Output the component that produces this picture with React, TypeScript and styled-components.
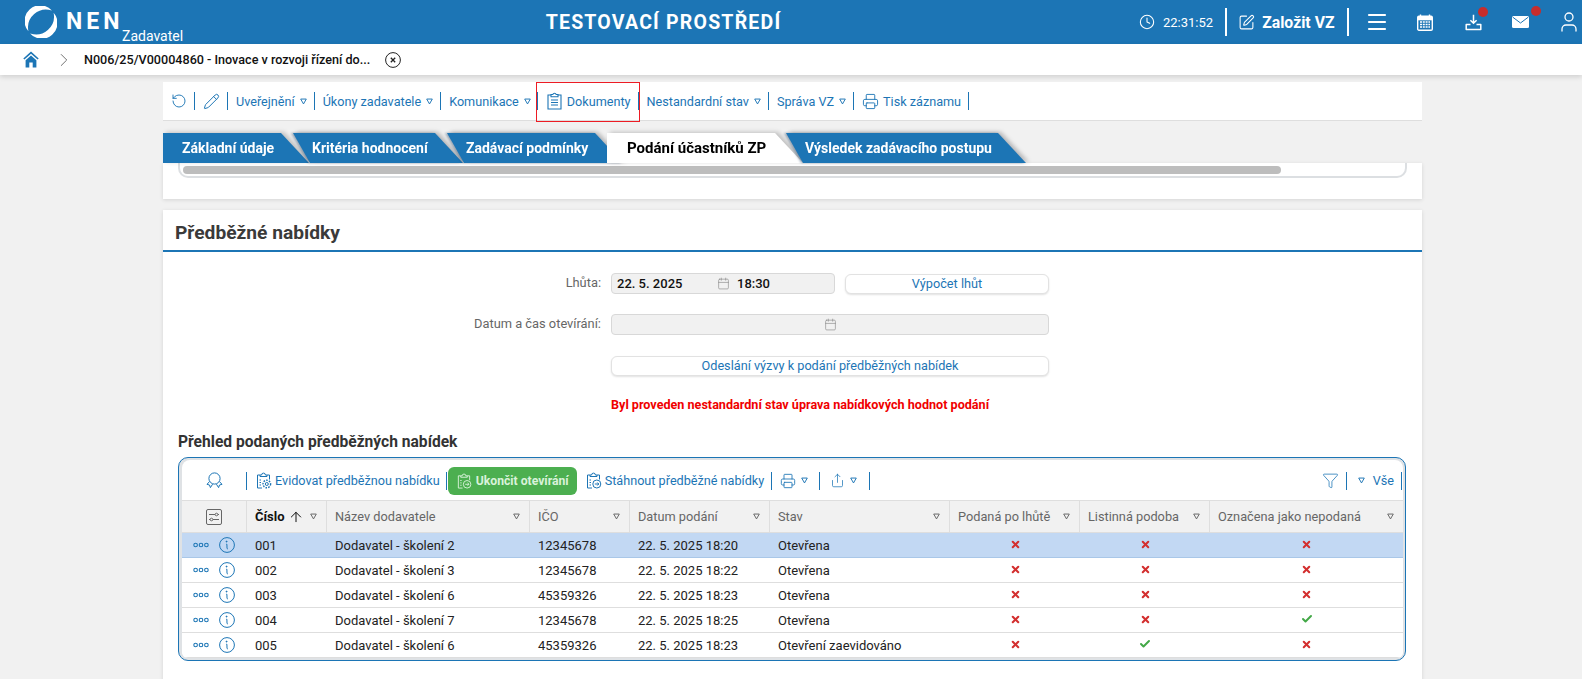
import styled, { createGlobalStyle } from "styled-components";
import {
  ArrowUp,
  Check,
  ChevronRight,
  Clock,
  Menu,
  Pencil,
  Printer,
  RotateCcw,
  Share,
  SquarePen,
  User,
  X,
  Calendar,
  Funnel,
} from "lucide-react";

const BLUE = "#1c75b5";

const GlobalStyle = createGlobalStyle`
  html, body {
    margin: 0;
    height: 679px;
    overflow: hidden;
    background: #f1f1f1;
    font-family: Roboto, "Liberation Sans", sans-serif;
    font-size: 13px;
  }
  * { box-sizing: border-box; }
`;

const TopBar = styled.header`
  display: flex;
  align-items: center;
  height: 44px;
  background: ${BLUE};
  color: #fff;
`;

const Brand = styled.div`
  position: relative;
  display: flex;
  align-items: center;
  width: 199px;
  height: 44px;
  padding-left: 25px;
`;

const BrandName = styled.span`
  margin-left: 9px;
  margin-top: -2px;
  font-size: 23px;
  font-weight: 700;
  letter-spacing: 4px;
`;

const BrandRole = styled.span`
  position: absolute;
  left: 122px;
  top: 28px;
  font-size: 14px;
  line-height: 16px;
`;

const EnvTitle = styled.div`
  flex: 1;
  text-align: center;
  font-size: 19.5px;
  font-weight: 700;
  letter-spacing: 1.2px;
`;

const TopActions = styled.div`
  display: flex;
  flex: none;
  align-items: center;
  width: 454px;
  height: 44px;
  padding-left: 11px;
  white-space: nowrap;
  & > * { flex: none; }
`;

const ClockText = styled.span`
  margin-left: 8px;
  font-size: 13px;
`;

const TopSep = styled.span`
  width: 2px;
  height: 28px;
  margin: 0 11px 0 12px;
  background: #fff;
`;

const NewLabel = styled.span`
  margin-left: 7px;
  font-size: 15.8px;
  font-weight: 700;
`;

const TopIcon = styled.span<{ $left: number; $dotX?: number; $dotY?: number }>`
  position: relative;
  display: flex;
  margin-left: ${(p) => p.$left}px;
  ${(p) =>
    p.$dotX !== undefined &&
    `&::after {
      content: "";
      position: absolute;
      left: ${p.$dotX}px;
      top: ${p.$dotY}px;
      width: 10px;
      height: 10px;
      border-radius: 50%;
      background: #c62d2d;
    }`}
`;

const Crumbs = styled.nav`
  position: relative;
  display: flex;
  align-items: center;
  height: 31px;
  padding-left: 23px;
  background: #fff;
  box-shadow: 0 2px 5px rgba(0, 0, 0, 0.14);
`;

const CrumbArrow = styled.span`
  display: flex;
  margin-left: 14px;
  color: #666;
`;

const CrumbText = styled.span`
  margin: 0 15px 0 9px;
  font-size: 12.6px;
  font-weight: 500;
  color: #111;
`;

const Page = styled.main`
  width: 1259px;
  margin-left: 163px;
`;

const ActionBar = styled.div`
  display: flex;
  align-items: center;
  height: 39px;
  margin-top: 7px;
  padding-left: 8px;
  background: #fff;
  border-bottom: 1px solid #dedede;
  color: ${BLUE};
`;

const Sep = styled.span<{ $h?: number; $l?: number; $r?: number; $hidden?: boolean }>`
  flex: none;
  width: 1px;
  height: ${(p) => p.$h ?? 18}px;
  margin: 0 ${(p) => p.$r ?? 8}px 0 ${(p) => p.$l ?? 7}px;
  background: ${(p) => (p.$hidden ? "transparent" : BLUE)};
`;

const ActionItem = styled.span<{ $gap?: number }>`
  display: inline-flex;
  align-items: center;
  gap: ${(p) => p.$gap ?? 5}px;
  font-size: 12.65px;
  white-space: nowrap;
  color: ${BLUE};
`;

const Highlight = styled.span`
  position: relative;
  display: inline-flex;
  align-items: center;
  &::after {
    content: "";
    position: absolute;
    left: -11px;
    right: -9px;
    top: -10px;
    bottom: -12px;
    border: 1px solid #ed1c24;
  }
`;

const TabStrip = styled.div`
  position: relative;
  display: flex;
  height: 30px;
  margin-top: 12px;
`;

const TabSlot = styled.div<{ $width: number; $active?: boolean; $first?: boolean; $z: number }>`
  position: relative;
  flex: none;
  width: ${(p) => p.$width}px;
  z-index: ${(p) => p.$z};
  filter: drop-shadow(3px -1px 2px rgba(0, 0, 0, 0.2))
    ${(p) => (p.$first || p.$active ? "" : "drop-shadow(-2px 0 1px rgba(0, 40, 80, 0.35))")};
`;

const TabFace = styled.div<{ $active?: boolean; $first?: boolean; $pad: number; $width: number }>`
  width: ${(p) => p.$width}px;
  height: 30px;
  padding-left: ${(p) => p.$pad}px;
  font-size: ${(p) => (p.$active ? 15 : 14)}px;
  line-height: 31px;
  font-weight: 700;
  white-space: nowrap;
  color: ${(p) => (p.$active ? "#000" : "#fff")};
  background: ${(p) => (p.$active ? "#fff" : BLUE)};
  clip-path: ${(p) =>
    p.$first || p.$active
      ? "polygon(0 0, calc(100% - 28px) 0, 100% 100%, 0 100%)"
      : "polygon(0 0, calc(100% - 28px) 0, 100% 100%, 17px 100%)"};
`;

const ScrollCard = styled.section`
  height: 36px;
  padding: 0 15px;
  background: #fff;
  box-shadow: 0 1px 4px rgba(0, 0, 0, 0.12);
`;

const ScrollTrack = styled.div`
  height: 15px;
  padding: 3px 3px 0 3px;
  border: 2px solid #dcdfe2;
  border-top: 0;
  border-radius: 0 0 10px 10px;
`;

const ScrollThumb = styled.div`
  width: 1098px;
  height: 8px;
  border-radius: 4px;
  background: #bdbdbd;
`;

const Card = styled.section`
  margin-top: 11px;
  height: 480px;
  background: #fff;
  box-shadow: 0 1px 4px rgba(0, 0, 0, 0.12);
`;

const CardTitle = styled.h2`
  margin: 0;
  height: 42px;
  padding: 12px 0 0 12px;
  border-bottom: 2px solid ${BLUE};
  font-size: 19.2px;
  line-height: 22px;
  font-weight: 700;
  color: #3a3a3a;
`;

const Form = styled.div`
  display: flex;
  flex-direction: column;
  gap: 20px;
  padding-top: 21px;
`;

const FormRow = styled.div`
  display: flex;
  align-items: center;
  height: 21px;
`;

const Label = styled.label`
  width: 438px;
  margin-right: 10px;
  margin-top: -3px;
  text-align: right;
  font-size: 12.85px;
  color: #666;
`;

const Field = styled.div<{ $width: number; $center?: boolean }>`
  display: flex;
  align-items: center;
  justify-content: ${(p) => (p.$center ? "center" : "flex-start")};
  width: ${(p) => p.$width}px;
  height: 21px;
  padding-left: ${(p) => (p.$center ? 0 : 5)}px;
  border: 1px solid #d8d8d8;
  border-radius: 4px;
  background: #f1f1f1;
  font-size: 13px;
  font-weight: 500;
  color: #111;
  svg { color: #8a8a8a; }
`;

const FieldDate = styled.span`
  width: 100px;
`;

const FieldTime = styled.span`
  margin-left: 7px;
`;

const FormButton = styled.button<{ $width: number; $left?: number }>`
  width: ${(p) => p.$width}px;
  height: 20px;
  margin-left: ${(p) => p.$left ?? 0}px;
  padding: 0;
  border: 1px solid #e2e2e2;
  border-radius: 6px;
  background: #fff;
  box-shadow: 0 1px 2px rgba(0, 0, 0, 0.12);
  font-family: inherit;
  font-size: 12.7px;
  color: ${BLUE};
`;

const Warning = styled.p`
  margin: 21px 0 0 448px;
  font-size: 12.6px;
  line-height: 15px;
  font-weight: 700;
  color: #f00000;
`;

const SectionTitle = styled.h3`
  margin: 21px 0 0 15px;
  font-size: 15.6px;
  line-height: 18px;
  font-weight: 700;
  color: #333;
`;

const Panel = styled.div`
  width: 1228px;
  height: 204px;
  margin: 6px 0 0 15px;
  padding: 2px 2px 2px 3px;
  border: 1px solid ${BLUE};
  border-radius: 10px;
  background: #dfe2e5;
`;

const PanelInner = styled.div`
  height: 198px;
  border-radius: 8px 8px 6px 6px;
  background: #fff;
  overflow: hidden;
`;

const PanelBar = styled.div`
  display: flex;
  align-items: center;
  height: 40px;
  padding-left: 24px;
  padding-top: 1px;
`;

const GreenButton = styled.span`
  display: inline-flex;
  align-items: center;
  gap: 4px;
  width: 129px;
  height: 28px;
  padding-left: 8px;
  border-radius: 6px;
  background: #4caf50;
  color: #d9f2da;
  font-size: 12.2px;
  font-weight: 700;
  white-space: nowrap;
`;

const Spacer = styled.span`
  flex: 1;
`;

const Grid = styled.div<{ $h: number; $selected?: boolean; $head?: boolean }>`
  display: grid;
  grid-template-columns: 65px 80px 203px 100px 140px 180px 130px 130px 193px;
  height: ${(p) => p.$h}px;
  border-top: ${(p) => (p.$head ? "1px solid #dedede" : "0")};
  border-bottom: 1px solid ${(p) => (p.$selected ? "#a9c7e8" : "#dedede")};
  background: ${(p) => (p.$head ? "#f1f1f1" : p.$selected ? "#c2d8f3" : "#fff")};
`;

const HeadCell = styled.div<{ $strong?: boolean }>`
  display: flex;
  align-items: center;
  justify-content: space-between;
  padding: 0 9px 0 8px;
  border-right: 1px solid #dedede;
  font-size: ${(p) => (p.$strong ? 13 : 12.75)}px;
  font-weight: ${(p) => (p.$strong ? 700 : 400)};
  color: ${(p) => (p.$strong ? "#111" : "#666")};
  white-space: nowrap;
  &:last-child { border-right: 0; }
`;

const SortMark = styled.span`
  display: inline-flex;
  align-items: center;
  gap: 6px;
  color: #111;
`;

const CornerCell = styled.div`
  display: flex;
  align-items: center;
  justify-content: center;
  border-right: 1px solid #dedede;
`;

const Cell = styled.div`
  display: flex;
  align-items: center;
  padding-left: 8px;
  font-size: 13px;
  color: #222;
  white-space: nowrap;
`;

const ActionCell = styled.div`
  display: flex;
  align-items: center;
  gap: 10px;
  padding-left: 11px;
  color: ${BLUE};
`;

const FlagCell = styled.div<{ $yes?: boolean }>`
  display: flex;
  align-items: center;
  justify-content: center;
  padding-bottom: 2px;
  color: ${(p) => (p.$yes ? "#43a847" : "#d32f2f")};
`;

const Logo = () => (
  <svg width="32" height="32" viewBox="0 0 32 32" fill="#fff">
    <path d="M3.4 25.2A15.6 15.6 0 0 1 26.9 4.6 A18 18 0 0 0 3.4 25.2Z" />
    <path d="M3.4 25.2A15.6 15.6 0 0 1 26.9 4.6 A18 18 0 0 0 3.4 25.2Z" transform="rotate(180 16 16)" />
  </svg>
);

const HomeIcon = () => (
  <svg width="16" height="17" viewBox="0 0 16 17" fill={BLUE}>
    <path d="M8 0.5 0.3 7.4 1.4 8.6 8 2.8 14.6 8.6 15.7 7.4Z" />
    <path d="M2.6 9.2 8 4.5 13.4 9.2V16.5H9.7V11.5H6.3V16.5H2.6Z" />
  </svg>
);

const CloseCircle = () => (
  <svg width="16" height="16" viewBox="0 0 16 16" fill="none" stroke="#222" strokeWidth="1">
    <circle cx="8" cy="8" r="7.4" />
    <path d="M5.8 5.8 10.2 10.2M10.2 5.8 5.8 10.2" strokeWidth="1.3" />
  </svg>
);

const CalendarIcon = () => (
  <svg width="16" height="17" viewBox="0 0 16 17" fill="none" stroke="#fff">
    <path d="M3.5 0.5V4M12.5 0.5V4" strokeWidth="1.4" />
    <rect x="0.7" y="2.2" width="14.6" height="14" rx="1.2" strokeWidth="1.4" />
    <path d="M1 3H15V6H1Z" fill="#fff" strokeWidth="0.6" />
    <path d="M3 8H13M3 10.5H13M3 13H13" strokeWidth="1.5" strokeDasharray="2 0.8" />
  </svg>
);

const Caret = ({ size = 7 }: { size?: number }) => (
  <svg width={size} height={size} viewBox="0 0 8 8" fill="none" stroke="currentColor" strokeWidth="1.1">
    <path d="M0.8 1.2H7.2L4 6.8Z" />
  </svg>
);

const GreyCaret = () => (
  <svg width="7" height="7" viewBox="0 0 8 8" fill="none" stroke="#666" strokeWidth="1.1">
    <path d="M0.8 1.2H7.2L4 6.8Z" />
  </svg>
);

const ClipIcon = ({ badge, size = 17 }: { badge?: "gear" | "arrow"; size?: number }) => (
  <svg width={size} height={size} viewBox="0 0 17 17" fill="none" stroke="currentColor" strokeWidth="1">
    <path d="M5 3H2.5V16H7M12 3H14.5V7.5" />
    <path d="M5 4.5V3H6.6A1.9 1.9 0 0 1 10.4 3H12V4.5Z" />
    <path d="M4.5 8H6M4.5 10.5H6M4.5 13H6" />
    {badge === "gear" ? (
      <>
        <circle cx="11.8" cy="12" r="1.5" />
        <circle cx="11.8" cy="12" r="3.8" strokeDasharray="1.6 1.2" strokeWidth="1.4" />
      </>
    ) : (
      <>
        <circle cx="11.8" cy="12" r="4" />
        <path d="M9.8 12H13.8M12.3 10.5 13.8 12 12.3 13.5" />
      </>
    )}
  </svg>
);

const DocIcon = () => (
  <svg width="15" height="18" viewBox="0 0 15 18" fill="none" stroke="currentColor" strokeWidth="1.1">
    <path d="M4 3H1V17H14V3H11" />
    <path d="M4 4.8V2.5H5.8A1.8 1.8 0 0 1 9.2 2.5H11V4.8Z" />
    <path d="M4 8H11M4 10.5H11M4 13H11" />
  </svg>
);

const RibbonIcon = () => (
  <svg width="17" height="17" viewBox="0 0 17 17" fill="none" stroke="currentColor" strokeWidth="1">
    <circle cx="8.5" cy="6.5" r="5.6" />
    <path d="M3.6 9.5 1 12.3 3.5 13 4.4 15.6 6.6 12.2" />
    <path d="M13.4 9.5 16 12.3 13.5 13 12.6 15.6 10.4 12.2" />
  </svg>
);

const PrinterIcon = ({ size = 17 }: { size?: number }) => <Printer size={size} strokeWidth={1.3} />;

const DownloadIcon = () => (
  <svg width="17" height="17" viewBox="0 0 17 17" fill="none" stroke="#fff" strokeWidth="1.5">
    <path d="M8.5 0.8V9M5.4 6.2 8.5 9.3 11.6 6.2" />
    <path d="M5.5 10.6H1.2V15.6H15.8V10.6H11.5" strokeLinejoin="round" />
  </svg>
);

const MailIcon = () => (
  <svg width="17" height="12" viewBox="0 0 17 12">
    <rect width="17" height="12" rx="1.5" fill="#fff" />
    <path d="M0.8 1.2 8.5 7 16.2 1.2" fill="none" stroke={BLUE} strokeWidth="1" />
  </svg>
);

const DotsIcon = () => (
  <svg width="16" height="6" viewBox="0 0 16 6" fill="none" stroke="currentColor" strokeWidth="1.1">
    <circle cx="2.6" cy="3" r="1.8" />
    <circle cx="8" cy="3" r="1.8" />
    <circle cx="13.4" cy="3" r="1.8" />
  </svg>
);

const InfoIcon = () => (
  <svg width="16" height="16" viewBox="0 0 16 16" fill="none" stroke="currentColor" strokeWidth="1">
    <circle cx="8" cy="8" r="7.4" />
    <circle cx="7.6" cy="4.6" r="0.5" fill="currentColor" />
    <path d="M7.2 7.2 7.9 7.2 8 11.2C8 11.8 8.4 11.9 9 11.5" />
  </svg>
);

const ColumnsIcon = () => (
  <svg width="16" height="16" viewBox="0 0 16 16" fill="none" stroke="#666" strokeWidth="1">
    <rect x="0.5" y="0.5" width="15" height="15" rx="1.5" />
    <path d="M3 5.5H9M12 5.5H13M3 10.5H4M7 10.5H13" />
    <circle cx="10.5" cy="5.5" r="1.3" />
    <circle cx="5.5" cy="10.5" r="1.3" />
  </svg>
);

const tabs = [
  { label: "Základní údaje", slot: 130, width: 146, pad: 19, z: 1 },
  { label: "Kritéria hodnocení", slot: 154, width: 170, pad: 19, z: 2 },
  { label: "Zadávací podmínky", slot: 160, width: 176, pad: 19, z: 3 },
  { label: "Podání účastníků ZP", slot: 179, width: 196, pad: 20, z: 4, active: true },
  { label: "Výsledek zadávacího postupu", slot: 240, width: 240, pad: 19, z: 5 },
];

const columns = [
  "Název dodavatele",
  "IČO",
  "Datum podání",
  "Stav",
  "Podaná po lhůtě",
  "Listinná podoba",
  "Označena jako nepodaná",
];

const rows = [
  { no: "001", name: "Dodavatel - školení 2", ico: "12345678", date: "22. 5. 2025 18:20", state: "Otevřena", flags: [false, false, false], selected: true },
  { no: "002", name: "Dodavatel - školení 3", ico: "12345678", date: "22. 5. 2025 18:22", state: "Otevřena", flags: [false, false, false] },
  { no: "003", name: "Dodavatel - školení 6", ico: "45359326", date: "22. 5. 2025 18:23", state: "Otevřena", flags: [false, false, false] },
  { no: "004", name: "Dodavatel - školení 7", ico: "12345678", date: "22. 5. 2025 18:25", state: "Otevřena", flags: [false, false, true] },
  { no: "005", name: "Dodavatel - školení 6", ico: "45359326", date: "22. 5. 2025 18:23", state: "Otevření zaevidováno", flags: [false, true, false] },
];

export default function App() {
  return (
    <>
      <GlobalStyle />
      <TopBar>
        <Brand>
          <Logo />
          <BrandName>NEN</BrandName>
          <BrandRole>Zadavatel</BrandRole>
        </Brand>
        <EnvTitle>TESTOVACÍ PROSTŘEDÍ</EnvTitle>
        <TopActions>
          <Clock size={16} strokeWidth={1.6} />
          <ClockText>22:31:52</ClockText>
          <TopSep />
          <SquarePen size={17} strokeWidth={1.5} />
          <NewLabel>Založit VZ</NewLabel>
          <TopSep />
          <TopIcon $left={5}>
            <Menu size={24} strokeWidth={2.2} />
          </TopIcon>
          <TopIcon $left={28}>
            <CalendarIcon />
          </TopIcon>
          <TopIcon $left={32} $dotX={13} $dotY={-7}>
            <DownloadIcon />
          </TopIcon>
          <TopIcon $left={30} $dotX={19} $dotY={-10}>
            <MailIcon />
          </TopIcon>
          <TopIcon $left={28}>
            <User size={24} strokeWidth={1.3} />
          </TopIcon>
        </TopActions>
      </TopBar>

      <Crumbs>
        <HomeIcon />
        <CrumbArrow>
          <ChevronRight size={22} strokeWidth={1} />
        </CrumbArrow>
        <CrumbText>N006/25/V00004860 - Inovace v rozvoji řízení do...</CrumbText>
        <CloseCircle />
      </Crumbs>

      <Page>
        <ActionBar>
          <RotateCcw size={16} strokeWidth={1.4} />
          <Sep />
          <Pencil size={17} strokeWidth={1.4} />
          <Sep />
          <ActionItem>Uveřejnění <Caret /></ActionItem>
          <Sep />
          <ActionItem>Úkony zadavatele <Caret /></ActionItem>
          <Sep />
          <ActionItem>Komunikace <Caret /></ActionItem>
          <Sep $l={6} $r={9} />
          <Highlight>
            <ActionItem><DocIcon /> Dokumenty</ActionItem>
          </Highlight>
          <Sep $l={7} $r={8} />
          <ActionItem>Nestandardní stav <Caret /></ActionItem>
          <Sep />
          <ActionItem>Správa VZ <Caret /></ActionItem>
          <Sep />
          <ActionItem $gap={4}><PrinterIcon /> Tisk záznamu</ActionItem>
          <Sep />
        </ActionBar>

        <TabStrip>
          {tabs.map((tab, i) => (
            <TabSlot key={tab.label} $width={tab.slot} $z={tab.z} $first={i === 0} $active={tab.active}>
              <TabFace $first={i === 0} $active={tab.active} $pad={tab.pad} $width={tab.width}>
                {tab.label}
              </TabFace>
            </TabSlot>
          ))}
        </TabStrip>

        <ScrollCard>
          <ScrollTrack>
            <ScrollThumb />
          </ScrollTrack>
        </ScrollCard>

        <Card>
          <CardTitle>Předběžné nabídky</CardTitle>
          <Form>
            <FormRow>
              <Label>Lhůta:</Label>
              <Field $width={224}>
                <FieldDate>22. 5. 2025</FieldDate>
                <Calendar size={13} strokeWidth={1.2} />
                <FieldTime>18:30</FieldTime>
              </Field>
              <FormButton $width={204} $left={10}>Výpočet lhůt</FormButton>
            </FormRow>
            <FormRow>
              <Label>Datum a čas otevírání:</Label>
              <Field $width={438} $center>
                <Calendar size={13} strokeWidth={1.2} />
              </Field>
            </FormRow>
            <FormRow>
              <Label />
              <FormButton $width={438}>Odeslání výzvy k podání předběžných nabídek</FormButton>
            </FormRow>
          </Form>
          <Warning>Byl proveden nestandardní stav úprava nabídkových hodnot podání</Warning>
          <SectionTitle>Přehled podaných předběžných nabídek</SectionTitle>
          <Panel>
            <PanelInner>
              <PanelBar>
                <ActionItem><RibbonIcon /></ActionItem>
                <Sep $l={23} $r={8} />
                <ActionItem $gap={3}><ClipIcon badge="gear" /> Evidovat předběžnou nabídku</ActionItem>
                <Sep $l={6} $r={1} />
                <GreenButton><ClipIcon size={16} /> Ukončit otevírání</GreenButton>
                <Sep $hidden $l={0} $r={7} />
                <ActionItem $gap={3}><ClipIcon /> Stáhnout předběžné nabídky</ActionItem>
                <Sep $l={7} $r={8} />
                <ActionItem><PrinterIcon size={16} /> <Caret /></ActionItem>
                <Sep $l={11} $r={10} />
                <ActionItem><Share size={15} strokeWidth={1.2} /> <Caret /></ActionItem>
                <Sep $l={12} $r={0} />
                <Spacer />
                <ActionItem><Funnel size={17} strokeWidth={1.1} /></ActionItem>
                <Sep $l={7} $r={11} />
                <ActionItem $gap={8}><Caret /> Vše</ActionItem>
                <Sep $l={7} $r={1} />
              </PanelBar>
              <Grid $h={33} $head>
                <CornerCell>
                  <ColumnsIcon />
                </CornerCell>
                <HeadCell $strong>
                  Číslo
                  <SortMark>
                    <ArrowUp size={16} strokeWidth={1.5} />
                    <GreyCaret />
                  </SortMark>
                </HeadCell>
                {columns.map((column) => (
                  <HeadCell key={column}>
                    {column}
                    <GreyCaret />
                  </HeadCell>
                ))}
              </Grid>
              {rows.map((row) => (
                <Grid key={row.no} $h={25} $selected={row.selected}>
                  <ActionCell>
                    <DotsIcon />
                    <InfoIcon />
                  </ActionCell>
                  <Cell>{row.no}</Cell>
                  <Cell>{row.name}</Cell>
                  <Cell>{row.ico}</Cell>
                  <Cell>{row.date}</Cell>
                  <Cell>{row.state}</Cell>
                  {row.flags.map((flag, i) => (
                    <FlagCell key={i} $yes={flag}>
                      {flag ? <Check size={12} strokeWidth={4} /> : <X size={11} strokeWidth={4.5} />}
                    </FlagCell>
                  ))}
                </Grid>
              ))}
            </PanelInner>
          </Panel>
        </Card>
      </Page>
    </>
  );
}
